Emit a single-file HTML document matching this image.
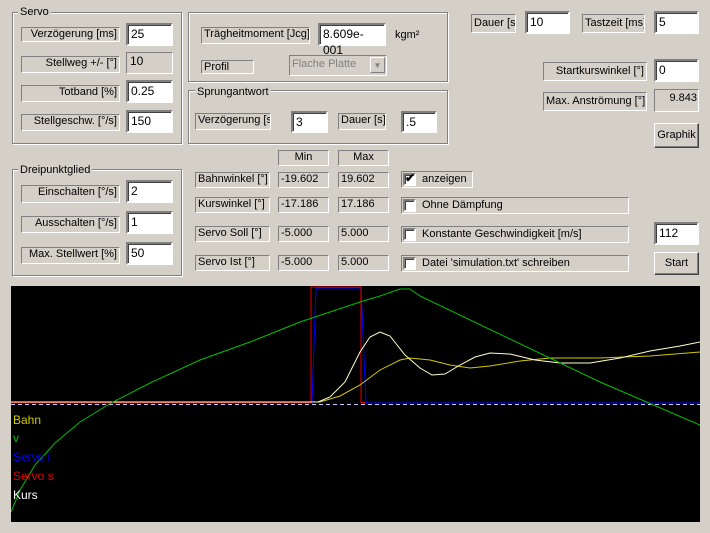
<!DOCTYPE html><html><head><meta charset="utf-8"><style>
*{box-sizing:border-box;margin:0;padding:0}
body{width:710px;height:533px;background:#d4d0c8;font-family:"Liberation Sans",sans-serif;font-size:11px;color:#000;position:relative;overflow:hidden}
.a{position:absolute;white-space:nowrap}
.g{position:absolute;border:1px solid #808080;box-shadow:1px 1px 0 #fff inset,1px 1px 0 #fff}
.gt{position:absolute;background:#d4d0c8;padding:0 2px;line-height:12px}
.l{position:absolute;border:1px solid;border-color:#808080 #fff #fff #808080;line-height:13px;padding:0 2px;white-space:nowrap;overflow:hidden}
.r{text-align:right}
.e{position:absolute;background:#fff;border:2px solid;border-color:#808080 #fff #fff #808080;box-shadow:1px 1px 0 #404040 inset;padding:1px 3px;font-size:12px;line-height:16px}
.ro{background:#d4d0c8;box-shadow:none;border-width:1px}
.b{position:absolute;border:1px solid;border-color:#fff #404040 #404040 #fff;box-shadow:-1px -1px 0 #808080 inset;text-align:center;line-height:20px}
.cb{position:absolute;width:13px;height:13px;background:#fff;border:2px solid;border-color:#808080 #fff #fff #808080;box-shadow:1px 1px 0 #404040 inset;top:1px;left:1px}
</style></head><body>
<!-- Servo -->
<div class="g" style="left:12px;top:12px;width:170px;height:132px"></div><div class="gt a" style="left:18px;top:6px">Servo</div>
<div class="l r" style="left:21px;top:27px;width:99px;height:15px">Verzögerung [ms]</div><div class="e" style="left:126px;top:23px;width:47px;height:23px">25</div>
<div class="l r" style="left:21px;top:56px;width:99px;height:17px">Stellweg +/- [°]</div><div class="e ro" style="left:126px;top:52px;width:47px;height:22px;padding-top:0">10</div>
<div class="l r" style="left:21px;top:85px;width:99px;height:17px">Totband [%]</div><div class="e" style="left:126px;top:80px;width:47px;height:23px">0.25</div>
<div class="l r" style="left:21px;top:114px;width:99px;height:17px">Stellgeschw. [°/s]</div><div class="e" style="left:126px;top:110px;width:47px;height:23px">150</div>
<!-- Traegheit -->
<div class="g" style="left:188px;top:12px;width:260px;height:70px"></div>
<div class="l" style="left:201px;top:27px;width:109px;height:17px">Trägheitmoment [Jcg]</div><div class="e" style="left:318px;top:23px;width:68px;height:23px">8.609e-001</div>
<div class="a" style="left:395px;top:29px">kgm²</div>
<div class="l" style="left:201px;top:60px;width:53px;height:14px">Profil</div>
<div class="e ro" style="left:289px;top:55px;width:98px;height:21px;color:#808080;padding:0 2px;line-height:17px;font-size:11px">Flache Platte<span style="position:absolute;right:1px;top:1px;width:15px;height:16px;border:1px solid;border-color:#fff #808080 #808080 #fff;color:#808080;font-size:8px;text-align:center;line-height:15px">▼</span></div>
<!-- Sprungantwort -->
<div class="g" style="left:188px;top:90px;width:260px;height:54px"></div><div class="gt a" style="left:195px;top:86px">Sprungantwort</div>
<div class="l" style="left:195px;top:113px;width:76px;height:17px">Verzögerung [s]</div><div class="e" style="left:291px;top:111px;width:37px;height:22px">3</div>
<div class="l" style="left:338px;top:113px;width:48px;height:17px">Dauer [s]</div><div class="e" style="left:401px;top:111px;width:36px;height:22px">.5</div>
<!-- right top -->
<div class="l" style="left:471px;top:14px;width:45px;height:19px;line-height:17px">Dauer [s]</div><div class="e" style="left:525px;top:11px;width:45px;height:23px">10</div>
<div class="l" style="left:582px;top:14px;width:63px;height:19px;line-height:17px">Tastzeit [ms]</div><div class="e" style="left:654px;top:11px;width:45px;height:23px">5</div>
<div class="l r" style="left:543px;top:62px;width:104px;height:19px;line-height:17px">Startkurswinkel [°]</div><div class="e" style="left:654px;top:59px;width:45px;height:23px">0</div>
<div class="l r" style="left:543px;top:92px;width:104px;height:19px;line-height:17px">Max. Anströmung [°]</div><div class="e ro r" style="left:654px;top:89px;width:45px;height:23px;padding:0 1px;font-size:11px">9.843</div>
<div class="b" style="left:654px;top:123px;width:45px;height:25px;line-height:22px">Graphik</div>
<!-- Dreipunkt -->
<div class="g" style="left:12px;top:169px;width:170px;height:107px"></div><div class="gt a" style="left:18px;top:164px">Dreipunktglied</div>
<div class="l r" style="left:21px;top:185px;width:99px;height:18px">Einschalten [°/s]</div><div class="e" style="left:126px;top:180px;width:47px;height:23px">2</div>
<div class="l r" style="left:21px;top:216px;width:99px;height:17px">Ausschalten [°/s]</div><div class="e" style="left:126px;top:211px;width:47px;height:23px">1</div>
<div class="l r" style="left:21px;top:247px;width:99px;height:17px">Max. Stellwert [%]</div><div class="e" style="left:126px;top:242px;width:47px;height:23px">50</div>
<!-- table -->
<div class="l" style="left:278px;top:150px;width:51px;height:16px;text-align:center">Min</div>
<div class="l" style="left:338px;top:150px;width:51px;height:16px;text-align:center">Max</div>
<div class="l" style="left:195px;top:172px;width:75px;height:16px">Bahnwinkel [°]</div><div class="l" style="left:278px;top:172px;width:51px;height:16px">-19.602</div><div class="l" style="left:338px;top:172px;width:51px;height:16px">19.602</div>
<div class="l" style="left:195px;top:197px;width:75px;height:16px">Kurswinkel [°]</div><div class="l" style="left:278px;top:197px;width:51px;height:16px">-17.186</div><div class="l" style="left:338px;top:197px;width:51px;height:16px">17.186</div>
<div class="l" style="left:195px;top:226px;width:75px;height:16px">Servo Soll [°]</div><div class="l" style="left:278px;top:226px;width:51px;height:16px">-5.000</div><div class="l" style="left:338px;top:226px;width:51px;height:16px">5.000</div>
<div class="l" style="left:195px;top:255px;width:75px;height:16px">Servo Ist [°]</div><div class="l" style="left:278px;top:255px;width:51px;height:16px">-5.000</div><div class="l" style="left:338px;top:255px;width:51px;height:16px">5.000</div>
<!-- checkboxes -->
<div class="l" style="left:401px;top:171px;width:72px;height:17px;padding-left:20px;line-height:15px"><span class="cb"></span><span class="a" style="left:3px;top:-1px;font-size:12px;font-weight:bold">✔</span>anzeigen</div>
<div class="l" style="left:401px;top:197px;width:228px;height:17px;padding-left:20px;line-height:15px"><span class="cb"></span>Ohne Dämpfung</div>
<div class="l" style="left:401px;top:226px;width:228px;height:17px;padding-left:20px;line-height:15px"><span class="cb"></span>Konstante Geschwindigkeit [m/s]</div>
<div class="l" style="left:401px;top:255px;width:228px;height:17px;padding-left:20px;line-height:15px"><span class="cb"></span>Datei 'simulation.txt' schreiben</div>
<div class="e" style="left:654px;top:222px;width:45px;height:23px">112</div>
<div class="b" style="left:654px;top:252px;width:45px;height:23px">Start</div>
<!-- plot -->
<svg class="a" style="left:11px;top:286px" width="689" height="236" viewBox="11 286 689 236">
<rect x="11" y="286" width="689" height="236" fill="#000"/>
<line x1="11" y1="404.5" x2="700" y2="404.5" stroke="#c8c8ff" stroke-dasharray="4,3"/>
<polyline fill="none" stroke="#0000ff" stroke-width="1" points="11,403 312,403 316,288 361,288 366,403 700,403"/>
<polyline fill="none" stroke="#e00000" stroke-width="1" points="11,402.5 311,402.5 311,287 361,287 361,402.5 366,402.5"/>
<polyline fill="none" stroke="#d0c800" points="11,402 320,402 340,396 360,385 380,370 400,360 410,358 430,360 450,365 470,368 490,366 520,361 550,358 600,358 650,356 700,352"/>
<polyline fill="none" stroke="#ffffd0" points="11,402 318,402 330,397 345,382 360,352 370,337 380,332 390,336 405,355 420,368 432,375 445,374 460,365 475,357 490,353 510,354 535,360 560,363 590,363 620,358 650,351 680,346 700,342"/>
<polyline fill="none" stroke="#00c000" points="11,512 20,490 35,465 55,443 80,422 111,403 150,383 200,360 250,342 300,322 330,312 360,302 380,296 400,289 410,289 420,296 600,382 700,425"/>
<g font-size="12">
<text x="13" y="424" fill="#d0c800">Bahn</text>
<text x="13" y="442" fill="#00c000">v</text>
<text x="13" y="461" fill="#0000ff">Servo i</text>
<text x="13" y="480" fill="#e00000">Servo s</text>
<text x="13" y="499" fill="#fff">Kurs</text>
</g></svg>
</body></html>
